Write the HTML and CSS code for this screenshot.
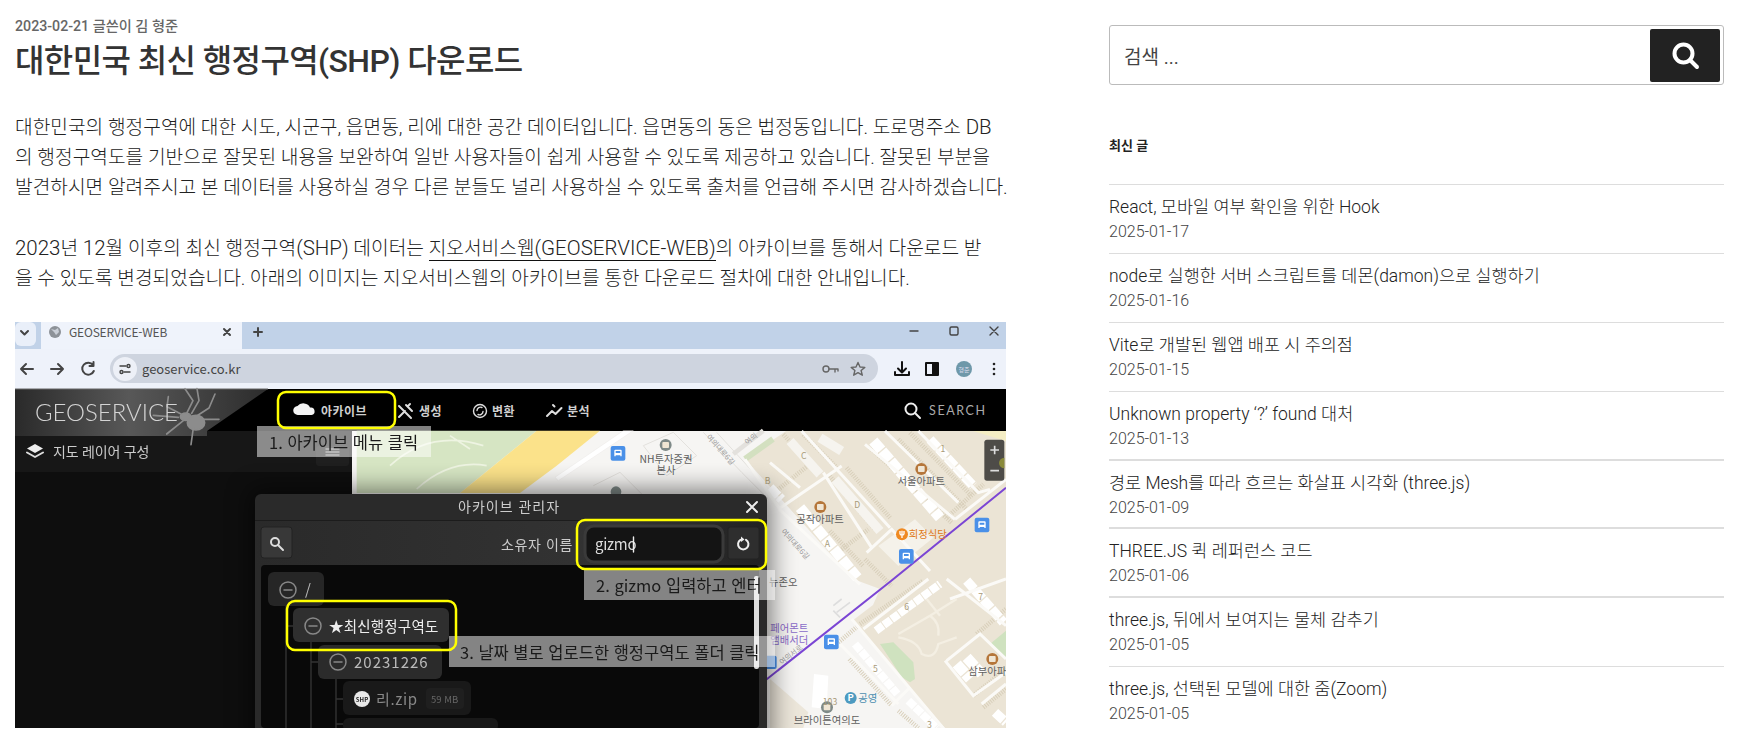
FILE: index.html
```html
<!DOCTYPE html>
<html lang="ko">
<head>
<meta charset="utf-8">
<title>대한민국 최신 행정구역(SHP) 다운로드</title>
<link rel="stylesheet" href="styles.css">
</head>
<body>
<div class="page">
  <main class="content">
    <div class="meta">2023-02-21 글쓴이 김 형준</div>
    <h1 class="title">대한민국 최신 행정구역(SHP) 다운로드</h1>
    <p class="para">대한민국의 행정구역에 대한 시도, 시군구, 읍면동, 리에 대한 공간 데이터입니다. 읍면동의 동은 법정동입니다. 도로명주소 <span class="lat">DB</span><br>의 행정구역도를 기반으로 잘못된 내용을 보완하여 일반 사용자들이 쉽게 사용할 수 있도록 제공하고 있습니다. 잘못된 부분을<br>발견하시면 알려주시고 본 데이터를 사용하실 경우 다른 분들도 널리 사용하실 수 있도록 출처를 언급해 주시면 감사하겠습니다.</p>
    <p class="para"><span class="lat">2023</span>년 <span class="lat">12</span>월 이후의 최신 행정구역<span class="lat">(SHP)</span> 데이터는 <a class="link" href="#">지오서비스웹<span class="lat">(GEOSERVICE-WEB)</span></a>의 아카이브를 통해서 다운로드 받<br>을 수 있도록 변경되었습니다. 아래의 이미지는 지오서비스웹의 아카이브를 통한 다운로드 절차에 대한 안내입니다.</p>
    <svg class="shot" viewBox="15 323 991 406" width="991" height="406" xmlns="http://www.w3.org/2000/svg">
      <defs>
        <linearGradient id="logo" x1="0" x2="1" y1="0" y2="0">
          <stop offset="0" stop-color="#2a2a2a"/><stop offset=".45" stop-color="#585858"/><stop offset="1" stop-color="#2c2c2c"/>
        </linearGradient>
        <linearGradient id="bar" x1="0" x2="1" y1="0" y2="0">
          <stop offset="0" stop-color="#2a2a2a"/><stop offset=".7" stop-color="#333"/><stop offset="1" stop-color="#222"/>
        </linearGradient>
        <filter id="soft" x="-10%" y="-10%" width="120%" height="120%"><feGaussianBlur stdDeviation="12"/></filter>
      </defs>

      <!-- browser chrome -->
      <rect x="15" y="323" width="991" height="27" fill="#c1d2e8"/>
      <rect x="15" y="323" width="21" height="24" rx="6" fill="#e9eff9"/>
      <path d="M21 332l3.500 3.500 3.500-3.500" class="ln dk w2"/>
      <path d="M41 323h201v27H41z" fill="#eff3fb"/>
      <circle cx="55" cy="333" r="6" fill="#8d9298"/>
      <path d="M51 330l4 1 3-2 1 4-3 3-2-3z" fill="#c9ced6"/>
      <text x="69" y="338" class="t tabt">GEOSERVICE-WEB</text>
      <path d="M224 330l6 6M230 330l-6 6" class="ln dk w2"/>
      <path d="M258 329v8M254 333h8" class="ln dk w2"/>
      <path d="M910 332h8" class="ln dk"/>
      <rect x="950" y="328" width="8" height="8" rx="1.500" class="ln dk"/>
      <path d="M990 328l8 8M998 328l-8 8" class="ln dk"/>
      <rect x="15" y="350" width="991" height="40" fill="#eef2fa"/>
      <path d="M33 370H21M26 365l-5 5 5 5" class="ln dk w2"/>
      <path d="M51 370h12M58 365l5 5-5 5" class="ln dk w2"/>
      <path d="M93 366a6 6 0 1 0 .800 6M93.500 363v4h-4" class="ln dk w2"/>
      <rect x="110" y="355" width="768" height="29" rx="14.500" fill="#ced4df"/>
      <circle cx="125" cy="370" r="12" fill="#edf0f7"/>
      <path d="M120 367h6M124 373h6" class="ln dk"/>
      <circle cx="128.500" cy="367" r="1.500" class="ln dk"/><circle cx="121.500" cy="373" r="1.500" class="ln dk"/>
      <text x="142" y="375" class="t urlt">geoservice.co.kr</text>
      <circle cx="826" cy="370" r="3" class="ln md"/><path d="M829 370h9v2M835 370v3" class="ln md"/>
      <path d="M858 363.500l2 4.500 4.800.400-3.700 3.100 1.200 4.700-4.300-2.500-4.300 2.500 1.200-4.700-3.700-3.100 4.800-.400z" class="ln md"/>
      <path d="M902 363v10M898 369.500l4 4 4-4M895 373v3h14v-3" class="ln blk w2"/>
      <rect x="926" y="364" width="12" height="12" class="ln blk w2"/><rect x="932" y="364" width="6" height="12" fill="#111"/>
      <circle cx="964" cy="370" r="8" fill="#6e98a9"/>
      <text x="964" y="373" class="t avatar">형준</text>
      <circle cx="994" cy="365" r="1.300" fill="#222"/><circle cx="994" cy="370" r="1.300" fill="#222"/><circle cx="994" cy="375" r="1.300" fill="#222"/>

      <!-- app header -->
      <rect x="15" y="390" width="991" height="42" fill="#000"/>
      <path d="M15 390h253l-61 42v5H15z" fill="url(#logo)"/>
      <path d="M15 390h253" stroke="#666" fill="none"/>
      <path d="M298 416a4.500 4.500 0 0 1-.500-9 7 6 0 0 1 12.500 1.500 3.800 3.800 0 0 1 1.500 7.500z" fill="#f4f4f4"/>
      <text x="321" y="417" class="t nav">아카이브</text>
      <path d="M399 407l12 12M410 405l-2.500 2.500M406 406l6 6M405 412l-6 6" class="ln nv w2"/>
      <text x="419" y="417" class="t nav">생성</text>
      <circle cx="480" cy="412" r="6.500" class="ln nv"/><path d="M482 408.500a3.500 3.500 0 0 0-5 3M478 415.500a3.500 3.500 0 0 0 5-3" class="ln nv"/>
      <text x="492" y="417" class="t nav">변환</text>
      <path d="M547 417l5-5 3.500 3 6-6M553 406l1.500 1.500" class="ln nv w2"/>
      <text x="567" y="417" class="t nav">분석</text>
      <circle cx="911" cy="410" r="5.500" class="ln wh w2"/><path d="M915 414l5 5" class="ln wh w2"/>
      <text x="929" y="416" class="t searcht">SEARCH</text>

      <!-- map -->
      <rect x="352" y="432" width="654" height="297" fill="#f6f5f3"/>
      <g transform="translate(500 310) scale(.33333)">
        <path d="M-430 365H110L-120 552H-430z" fill="#d6e5c3"/>
        <path d="M-120 552L110 365H300L170 470 60 552z" fill="#fbe28a"/>
        <path d="M165 505l205-140h30L175 515z" fill="#fff" stroke="#e4e2de"/>
        <path d="M-330 470q120-110 280-60M-250 540q100-90 210-70M-150 380l60 40" fill="none" stroke="#eef4e2" stroke-width="5"/>
        <path d="M430 410l90-40 70 70-90 60zM280 530l80-40 70 70M610 370l115 120 80 80M650 370l110 120" fill="none" stroke="#e3e1dd" stroke-width="3"/>
        <path d="M700 435l90-70" stroke="#e3e1dd" stroke-width="14" fill="none"/>
      </g>
      <path d="M745 460l41-28h220v297h-61l-93-107 21-16 7-16-27-10z" fill="#ebe4d5"/>
      <path d="M745 460l28-20" stroke="#d3e0c0" stroke-width="6" fill="none"/>
      <path d="M973 432h33v10z" fill="#f4edc4"/>

      <g transform="translate(770 432) scale(.33333)">
        <path d="M325 345L435 265l55 55-105 85z" fill="#f5f2ea"/>
        <g class="dots">
          <path d="M40 10l110 120M125 95L25 175M100 10L205 115M175 130l140 165M230 110l130 150M215 355l80-60M300 50l245 225M385 25L590 235M530 260L640 160M420 5l185 190M285 385l80 80M180 300l100 105"/>
        </g>
        <g class="bld">
          <path class="b34" d="M310 30L510 260"/>
          <path class="b30" d="M480 25L610 165"/>
          <path class="b34" d="M90 230L262 440"/>
          <path class="bh" d="M60 30L150 130M195 145L330 300"/>
          <path class="b30" d="M0 170L35 205"/>
          <path class="bh" d="M150 20L215 60"/>
        </g>
        <g class="rd">
          <path d="M95 0L360 290M160 125L305 350M25 235L215 105M290 365L365 295 480 420M285 40L555 265M345 0L565 215M445 0L625 185 660 175M555 265L708 145M28 235L270 460M-75 85L30 235M0 95L90 170"/>
        </g>
      </g>

      <g transform="translate(770 580) scale(.33333)">
        <path d="M330 195l40-5 60 60 5 50-15 10-25-15-35-55zM660 195l48-40v80l-28-25z" fill="#cfe2bf"/>
        <path d="M0 300l115 100-15 47H0z" fill="#ece6da"/>
        <path d="M132 285l43 5-5 100-45-5z" fill="#fff"/>
        <g class="dots">
          <path d="M270 135L460 5M238 240L365 380M610 350L708 270M385 395l60 52M640 385L708 330M620 165L708 90M205 190l60-50"/>
        </g>
        <g class="bld">
          <path class="b26" d="M255 195L382 345"/>
          <path class="b26" d="M415 365L500 447"/>
          <path class="b26" d="M318 155L510 15"/>
          <path class="b30" d="M590 5L700 130"/>
          <path class="b34" d="M560 255L600 300"/>
          <path class="b34" d="M590 235L635 285"/>
          <path class="b30" d="M675 400L708 430"/>
        </g>
        <g class="rd">
          <path d="M245 120L530 460M280 150L475 0M210 195L385 375M365 380L415 330M530 245L630 165 708 240M525 245L610 350 708 280M635 375L708 315M530 0L708 140M540 60L708 0"/>
        </g>
        <g class="path">
          <path d="M385 165L480 110 560 60M480 110q30 20 25 60M385 175q60 10 70 50q40 20 50-30l55-20M470 60l40 50"/>
        </g>
        <path d="M200 100l40-30M190 80l25-20M210 115l-20-20" stroke="#ddd" stroke-width="5" fill="none"/>
      </g>
      <path d="M762 684L891 582 1006 488.700" stroke="#7b45d4" stroke-width="2" fill="none"/>

      <g transform="translate(500 310) scale(.33333)">
        <g fill="#4a90e8">
          <rect x="332" y="411" width="44" height="44" rx="6"/><rect x="1197" y="720" width="44" height="44" rx="6"/><rect x="1424" y="626" width="44" height="44" rx="6"/><rect x="972" y="977" width="44" height="44" rx="6"/><rect x="790" y="1040" width="40" height="40" rx="6"/>
        </g>
        <g fill="#fff">
          <path d="M343 425a3 3 0 0 1 3-3h16a3 3 0 0 1 3 3v17h-4v-3h-14v3h-4zM347 426v6h14v-6z"/>
          <path d="M1208 734a3 3 0 0 1 3-3h16a3 3 0 0 1 3 3v17h-4v-3h-14v3h-4zM1212 735v6h14v-6z"/>
          <path d="M1435 640a3 3 0 0 1 3-3h16a3 3 0 0 1 3 3v17h-4v-3h-14v3h-4zM1439 641v6h14v-6z"/>
          <path d="M983 991a3 3 0 0 1 3-3h16a3 3 0 0 1 3 3v17h-4v-3h-14v3h-4zM987 992v6h14v-6z"/>
        </g>
        <g fill="#7f8a88">
          <circle cx="497" cy="408" r="18"/><circle cx="981" cy="1195" r="18"/><circle cx="348" cy="548" r="16"/>
        </g>
        <g fill="#b5763a">
          <circle cx="1264" cy="480" r="18"/><circle cx="961" cy="594" r="18"/><circle cx="1477" cy="1050" r="18"/>
        </g>
        <g fill="#f0e6d4">
          <rect x="1254" y="471" width="20" height="18" rx="3"/><rect x="951" y="585" width="20" height="18" rx="3"/><rect x="1467" y="1041" width="20" height="18" rx="3"/>
          <rect x="487" y="399" width="20" height="18" rx="3"/><rect x="971" y="1186" width="20" height="18" rx="3"/>
        </g>
        <circle cx="1206" cy="676" r="18" fill="#ef8a22"/>
        <path d="M1206 665v22M1200 666v8q0 4 6 4t6-4v-8" stroke="#fff" stroke-width="4" fill="none"/>
        <circle cx="1052" cy="1167" r="18" fill="#4d9ac0"/>
        <text x="1052" y="1177" class="t mapw">P</text>
        <g class="t mapl">
          <text x="498" y="461">NH투자증권</text><text x="498" y="494">본사</text>
          <text x="1264" y="529">서울아파트</text><text x="960" y="643">공작아파트</text>
          <text x="1462" y="1098">삼부아파</text><text x="981" y="1244">브라이튼여의도</text>
          <text x="1103" y="1178" class="blue">공영</text>
          <text x="1283" y="686" class="orange">희정식당</text>
          <text x="868" y="970" class="purple">페어몬트</text><text x="868" y="1004" class="purple">앰배서더</text>
          <text x="850" y="832">뉴존오</text>
        </g>
        <g class="t mapn">
          <text x="1329" y="430">1</text><text x="911" y="451">C</text><text x="803" y="526">B</text><text x="1072" y="596">D</text><text x="982" y="713">A</text><text x="1442" y="873">7</text><text x="1220" y="903">6</text><text x="1126" y="1088">5</text><text x="1288" y="1256">3</text><text x="990" y="1187">103</text>
        </g>
        <g class="t mapr">
          <text transform="translate(618 385) rotate(48)">여의대로6길</text>
          <text transform="translate(842 668) rotate(48)">여의대로6길</text>
          <text transform="translate(742 408) rotate(-38)">여의</text>
          <text transform="translate(846 1068) rotate(-38)">여의서로</text>
        </g>
        <rect x="1453" y="392" width="60" height="123" rx="8" fill="#4e4c48"/>
        <path d="M1484 410v26M1471 423h26M1471 485h26" stroke="#ddd" stroke-width="5" fill="none"/>
        <path d="M1513 446a16 16 0 0 0 0 32z" fill="#8a8a3a"/>
      </g>

      <!-- left panel -->
      <path d="M207 432h145v5H207z" fill="#171717"/>
      <rect x="15" y="437" width="337" height="36" fill="#171717"/>
      <rect x="15" y="473" width="337" height="256" fill="#0e0e0e"/>
      <g transform="translate(15 385) scale(.33333)" class="spider">
        <ellipse cx="543" cy="116" rx="26" ry="22" fill="#8c8c8c"/>
        <ellipse cx="512" cy="98" rx="16" ry="11" fill="#8c8c8c"/>
        <path d="M498 90L456 68 460 38M516 86L534 50 510 14M530 88L552 50 546 14M545 96L582 72 600 30M490 100L415 94M560 106L612 106M505 110L455 150M535 132L528 182"/>
      </g>
      <text x="35" y="422" class="t logot" textLength="143" lengthAdjust="spacingAndGlyphs">GEOSERVICE</text>
      <path d="M35 445l8 4.500-8 4.500-8-4.500z" fill="#eee"/>
      <path d="M27 453.500l8 4.500 8-4.500" class="ln lt w2"/>
      <text x="53" y="458" class="t panelt">지도 레이어 구성</text>
      <rect x="316" y="447" width="33" height="20" rx="3" fill="#1f1f1f"/>
      <path d="M326 450h13M326 453h13M326 456h13" class="ln md2"/>

      <!-- modal -->
      <rect x="250" y="490" width="522" height="260" fill="#000" opacity=".5" filter="url(#soft)"/>
      <path d="M255 729V501a6 6 0 0 1 6-6h500a6 6 0 0 1 6 6v228z" fill="#2a2a2a"/>
      <rect x="255" y="521" width="512" height="1.500" fill="#1c1c1c"/>
      <text x="458" y="513" class="t modalt">아카이브 관리자</text>
      <path d="M747 503l10 10M757 503l-10 10" class="ln wh w2"/>
      <rect x="255" y="522" width="512" height="44" fill="url(#bar)"/>
      <rect x="261" y="528" width="31" height="31" rx="3" fill="#383838" stroke="#222"/>
      <circle cx="275" cy="543" r="4" class="ln lt w2"/><path d="M278 546l5 5" class="ln lt w2"/>
      <text x="501" y="551" class="t owner">소유자 이름</text>
      <rect x="585" y="527" width="138" height="36" rx="9" fill="#141414" stroke="#3a3a3a" stroke-width="3"/>
      <text x="595" y="551" class="t gizmo">gizmo</text>
      <path d="M633.500 538v15" class="ln wh"/>
      <rect x="728" y="528" width="31" height="32" rx="2" fill="#2e2e2e" stroke="#222"/>
      <path d="M740.500 540.800a5.200 5.200 0 1 0 5.500 0" class="ln wh w2"/>
      <path d="M741 537.500l3.500 3-3.500 2.500z" fill="#eee"/>
      <rect x="261" y="566" width="498" height="163" rx="4" fill="#090909"/>
      <rect x="754" y="577" width="5" height="93" rx="2" fill="#ddd"/>

      <path d="M286 607v122M286 627h7M311 643v86M311 663h7M336 680v49M336 700h7M336 725h7" class="ln tree"/>
      <rect x="268" y="573" width="56" height="34" rx="6" fill="#262626"/>
      <circle cx="288" cy="591" r="8" class="ln gr w15"/><path d="M284 591h8" class="ln gr w15"/>
      <text x="305" y="597" class="t node">/</text>
      <rect x="293" y="609" width="156" height="34" rx="6" fill="#2f2f2f"/>
      <circle cx="313" cy="627" r="8" class="ln gr w15"/><path d="M309 627h8" class="ln gr w15"/>
      <text x="329" y="633" class="t nodeb">★최신행정구역도</text>
      <rect x="318" y="646" width="124" height="34" rx="6" fill="#2b2b2b"/>
      <circle cx="338" cy="663" r="8" class="ln gr w15"/><path d="M334 663h8" class="ln gr w15"/>
      <text x="354" y="669" class="t node spaced">20231226</text>
      <rect x="343" y="682" width="128" height="34" rx="6" fill="#191919"/>
      <circle cx="362" cy="700" r="8" fill="#e8e8e8"/>
      <text x="362" y="703" class="t shp">SHP</text>
      <text x="376" y="706" class="t file">리.zip</text>
      <rect x="426" y="689" width="38" height="21" rx="4" fill="#1f1f1f"/>
      <text x="431" y="704" class="t size">59 MB</text>
      <rect x="343" y="719" width="155" height="14" rx="6" fill="#191919"/>
      <circle cx="362" cy="737" r="8" fill="#e8e8e8"/>

      <!-- annotations -->
      <rect x="257" y="427" width="174" height="31" class="note"/>
      <text x="269" y="450" class="t notet">1. 아카이브 메뉴 클릭</text>
      <rect x="584" y="571" width="191" height="30" class="note"/>
      <text x="596" y="593" class="t notet">2. gizmo 입력하고 엔터</text>
      <rect x="449" y="637" width="326" height="31" class="note"/>
      <text x="460" y="660" class="t notet">3. 날짜 별로 업로드한 행정구역도 폴더 클릭</text>
      <rect x="278" y="393" width="117" height="36" rx="8" class="hl"/>
      <rect x="577" y="521" width="189" height="49" rx="8" class="hl"/>
      <rect x="287" y="602" width="169" height="49" rx="8" class="hl"/>
    </svg>
  </main>

  <aside class="side">
    <form class="search">
      <span class="search-text">검색 ...</span>
      <button class="search-btn" type="button" aria-label="검색">
        <svg width="30" height="30" viewBox="0 0 30 30"><circle cx="13.500" cy="13.500" r="9" fill="none" stroke="#fff" stroke-width="4"/><path d="M20 20l7 7" stroke="#fff" stroke-width="4" stroke-linecap="round"/></svg>
      </button>
    </form>
    <h2 class="side-title">최신 글</h2>
    <ul class="posts">
      <li class="post"><a class="post-link" href="#">React, 모바일 여부 확인을 위한 Hook</a><span class="post-date">2025-01-17</span></li>
      <li class="post"><a class="post-link" href="#">node로 실행한 서버 스크립트를 데몬(damon)으로 실행하기</a><span class="post-date">2025-01-16</span></li>
      <li class="post"><a class="post-link" href="#">Vite로 개발된 웹앱 배포 시 주의점</a><span class="post-date">2025-01-15</span></li>
      <li class="post"><a class="post-link" href="#">Unknown property ‘?’ found 대처</a><span class="post-date">2025-01-13</span></li>
      <li class="post"><a class="post-link" href="#">경로 Mesh를 따라 흐르는 화살표 시각화 (three.js)</a><span class="post-date">2025-01-09</span></li>
      <li class="post"><a class="post-link" href="#">THREE.JS 퀵 레퍼런스 코드</a><span class="post-date">2025-01-06</span></li>
      <li class="post"><a class="post-link" href="#">three.js, 뒤에서 보여지는 물체 감추기</a><span class="post-date">2025-01-05</span></li>
      <li class="post"><a class="post-link" href="#">three.js, 선택된 모델에 대한 줌(Zoom)</a><span class="post-date">2025-01-05</span></li>
    </ul>
  </aside>
</div>
</body>
</html>
```
FILE: styles.css
```css
* { box-sizing: border-box; }
html, body { margin: 0; height: 729px; overflow: hidden; background: #fff; }
body { font-family: Roboto, "Noto Sans CJK KR", sans-serif; color: #222; font-weight: 300; }
.page { display: flex; padding-left: 15px; }
.content { width: 991px; flex: none; padding-top: 16px; }
.meta { font-size: 14.200px; line-height: 20px; color: #666; font-weight: 500; }
.title { margin: 4px 0 0; font-size: 32px; line-height: 42px; font-weight: 500; color: #333; letter-spacing: -.6px; }
.para { margin: 30px 0 0; font-size: 19.200px; line-height: 30px; white-space: nowrap; }
.lat { font-size: 20.500px; }
.link { color: #222; text-decoration: none; border-bottom: 1px solid #111; }
.shot { display: block; margin-top: 28px; filter: blur(.45px); }
.side { margin-left: 103px; width: 615px; flex: none; padding-top: 25px; }
.search { height: 60px; border: 1px solid #bbb; border-radius: 3px; display: flex; align-items: center; justify-content: space-between; padding: 0 3px 0 14px; }
.search-text { font-size: 19px; color: #444; font-weight: 400; }
.search-btn { width: 70px; height: 53px; background: #222; border: 0; border-radius: 2px; display: flex; align-items: center; justify-content: center; padding: 0; }
.side-title { margin: 51px 0 0; font-size: 13px; line-height: 20px; font-weight: 700; color: #222; }
.posts { list-style: none; margin: 28px 0 0; padding: 0; border-top: 1px solid #ddd; }
.post { height: 68.900px; border-bottom: 1px solid #ddd; padding-top: 8px; display: flex; flex-direction: column; }
.post:nth-child(n+4):nth-child(-n+6) { border-bottom-width: 2px; }
.post-link { font-size: 17.500px; line-height: 28px; color: #222; text-decoration: none; }
.post-date { font-size: 16px; line-height: 22px; color: #444; }

.t { font-family: "Noto Sans CJK KR", "Noto Sans", sans-serif; font-weight: 400; }
.ln { fill: none; stroke-width: 1.400; stroke-linecap: round; stroke-linejoin: round; }
.w2 { stroke-width: 2; }
.w15 { stroke-width: 1.500; }
.dk { stroke: #444; }
.md { stroke: #666; }
.md2 { stroke: #888; }
.blk { stroke: #111; }
.nv { stroke: #ddd; }
.wh { stroke: #eee; }
.lt { stroke: #ddd; }
.gr { stroke: #888; }
.tree { stroke: #333; }
.spider { fill: none; stroke: #8c8c8c; stroke-width: 5; stroke-linejoin: round; stroke-linecap: round; }
.tabt { font-size: 12px; fill: #555; letter-spacing: -.2px; }
.urlt { font-size: 13px; fill: #444; }
.avatar { font-size: 6px; fill: #dde; text-anchor: middle; }
.logot { font-family: Lato, sans-serif; font-weight: 300; font-size: 23px; fill: #d4d4d4; }
.nav { font-size: 12px; font-weight: 700; fill: #d0d0d0; letter-spacing: .5px; }
.searcht { font-family: Lato, sans-serif; font-size: 12.500px; fill: #aaa; letter-spacing: 1.600px; }
.panelt { font-size: 14px; fill: #ccc; letter-spacing: -.2px; }
.modalt { font-size: 14px; fill: #ccc; letter-spacing: 1px; }
.owner { font-size: 14px; fill: #ccc; letter-spacing: .6px; }
.gizmo { font-size: 15px; fill: #ddd; letter-spacing: -.3px; }
.node { font-size: 15px; fill: #bbb; }
.nodeb { font-size: 14.500px; fill: #eee; letter-spacing: .2px; }
.spaced { letter-spacing: 1px; }
.file { font-size: 15px; fill: #888; letter-spacing: .6px; }
.size { font-size: 9.500px; fill: #666; }
.shp { font-size: 6px; font-weight: 700; fill: #222; text-anchor: middle; }
.note { fill: #fff; fill-opacity: .5; }
.notet { font-size: 16.500px; fill: #1a1a1a; }
.hl { fill: none; stroke: #ff0; stroke-width: 2.500; }
.mapl { font-size: 31px; fill: #5f5f5f; text-anchor: middle; }
.mapl .blue { fill: #4d8fb0; }
.mapl .orange { fill: #e07a1a; }
.mapl .purple { fill: #8a6ac8; }
.mapw { font-size: 28px; fill: #fff; text-anchor: middle; font-weight: 700; }
.mapn { font-size: 26px; fill: #a89a78; text-anchor: middle; }
.mapr { font-size: 22px; fill: #9a9a9a; }
.rd path { fill: none; stroke: #fbfaf7; stroke-width: 9; }
.path path { fill: none; stroke: #f4efe3; stroke-width: 7; }
.dots path { fill: none; stroke: #d8cfba; stroke-width: 14; stroke-dasharray: 3 4; }
.b34, .b30, .b26, .bh { fill: none; stroke: #fff; }
.b34 { stroke-width: 32; stroke-dasharray: 36 4; }
.b30 { stroke-width: 28; stroke-dasharray: 34 4; }
.b26 { stroke-width: 24; stroke-dasharray: 26 3; }
.bh { stroke-width: 28; stroke: #f6f4ef; }
```
